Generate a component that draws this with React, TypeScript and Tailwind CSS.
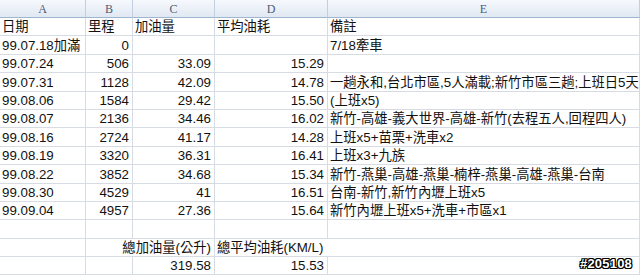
type Align = "l" | "r";
type Cell = { t: string; a?: Align; noRight?: boolean };

const cols = ["A", "B", "C", "D", "E"];

const L = (t: string): Cell => ({ t, a: "l" });
const R = (t: string): Cell => ({ t, a: "r" });
const E: Cell = { t: "" };

const rows: Cell[][] = [
  [L("日期"), L("里程"), L("加油量"), L("平均油耗"), L("備註")],
  [L("99.07.18加滿"), R("0"), E, E, L("7/18牽車")],
  [L("99.07.24"), R("506"), R("33.09"), R("15.29"), E],
  [L("99.07.31"), R("1128"), R("42.09"), R("14.78"), L("一趟永和,台北市區,5人滿載;新竹市區三趟;上班日5天")],
  [L("99.08.06"), R("1584"), R("29.42"), R("15.50"), L("(上班x5)")],
  [L("99.08.07"), R("2136"), R("34.46"), R("16.02"), L("新竹-高雄-義大世界-高雄-新竹(去程五人,回程四人)")],
  [L("99.08.16"), R("2724"), R("41.17"), R("14.28"), L("上班x5+苗栗+洗車x2")],
  [L("99.08.19"), R("3320"), R("36.31"), R("16.41"), L("上班x3+九族")],
  [L("99.08.22"), R("3852"), R("34.68"), R("15.34"), L("新竹-燕巢-高雄-燕巢-楠梓-燕巢-高雄-燕巢-台南")],
  [L("99.08.30"), R("4529"), R("41"), R("16.51"), L("台南-新竹,新竹內壢上班x5")],
  [L("99.09.04"), R("4957"), R("27.36"), R("15.64"), L("新竹內壢上班x5+洗車+市區x1")],
  [E, E, E, E, E],
  [E, { t: "", noRight: true }, R("總加油量(公升)"), { t: "總平均油耗(KM/L)", a: "l", noRight: true }, E],
  [E, E, R("319.58"), R("15.53"), E],
];

function GridCell({ cell }: { cell: Cell }) {
  return (
    <div
      className={
        "flex h-[18.4px] items-end whitespace-nowrap border-b border-[#d6dbe4] pb-[1px] " +
        (cell.noRight ? "" : "border-r ") +
        (cell.a === "r" ? "justify-end pr-[3px]" : "justify-start pl-[2px]")
      }
    >
      {cell.t && <span className="relative z-10 leading-[15px]">{cell.t}</span>}
    </div>
  );
}

export default function App() {
  return (
    <div
      className="relative h-[275px] w-[640px] overflow-hidden bg-white text-[13.3px] text-[#111]"
      style={{ fontFamily: '"Liberation Sans", "Noto Sans CJK TC", sans-serif' }}
    >
      <div className="grid grid-cols-[86px_47px_82px_113px_1fr]">
        {cols.map((c) => (
          <div
            key={c}
            className="flex h-[18px] items-center justify-center border-r border-b border-r-[#c3cfdf] border-b-[#9eb6ce] bg-gradient-to-b from-[#f6f9fd] to-[#e1e8f2] text-[12px] text-[#4d5d78]"
            style={{ fontFamily: '"Liberation Serif", serif' }}
          >
            {c}
          </div>
        ))}
        {rows.map((row, i) =>
          row.map((cell, j) => <GridCell key={`${i}-${j}`} cell={cell} />),
        )}
      </div>
      <div
        className="absolute right-[8px] bottom-[2px] text-[13px] font-bold tracking-[0.2px] text-white"
        style={{
          fontFamily: '"Liberation Sans", sans-serif',
          textShadow:
            "1px 0 0 #000, -1px 0 0 #000, 0 1px 0 #000, 0 -1px 0 #000, 1px 1px 0 #000, -1px -1px 0 #000, 1px -1px 0 #000, -1px 1px 0 #000",
        }}
      >
        #205108
      </div>
    </div>
  );
}
